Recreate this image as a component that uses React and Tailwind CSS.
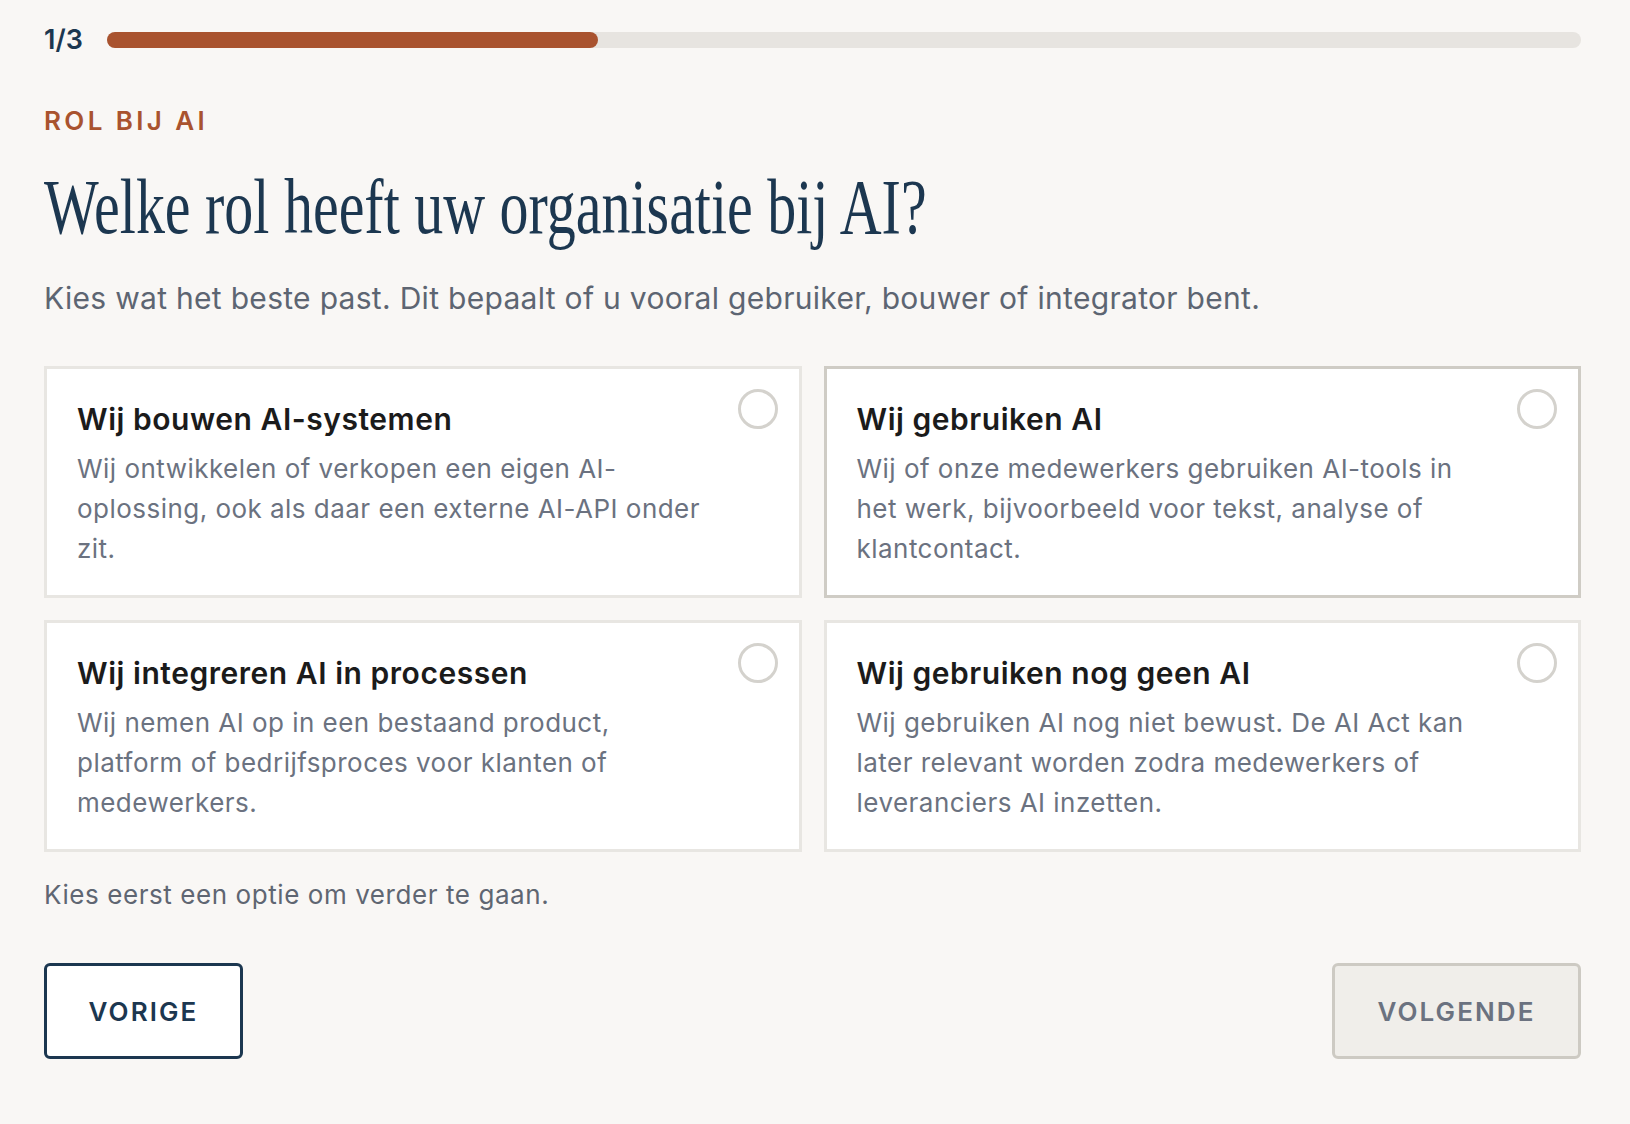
import { useState } from 'react';

const options = [
  {
    id: 'bouwer',
    title: 'Wij bouwen AI-systemen',
    text: 'Wij ontwikkelen of verkopen een eigen AI-oplossing, ook als daar een externe AI-API onder zit.',
  },
  {
    id: 'gebruiker',
    title: 'Wij gebruiken AI',
    text: 'Wij of onze medewerkers gebruiken AI-tools in het werk, bijvoorbeeld voor tekst, analyse of klantcontact.',
  },
  {
    id: 'integrator',
    title: 'Wij integreren AI in processen',
    text: 'Wij nemen AI op in een bestaand product, platform of bedrijfsproces voor klanten of medewerkers.',
  },
  {
    id: 'geen',
    title: 'Wij gebruiken nog geen AI',
    text: 'Wij gebruiken AI nog niet bewust. De AI Act kan later relevant worden zodra medewerkers of leveranciers AI inzetten.',
  },
];

function OptionCard({ option, hovered, onHover }) {
  return (
    <button
      type="button"
      onMouseEnter={() => onHover(option.id)}
      className={`flex items-start gap-7 bg-white border-[3px] pl-[30px] pr-[21px] pt-5 pb-[26px] text-left ${
        hovered ? 'border-[#cfccc5]' : 'border-[#e8e6e2]'
      }`}
    >
      <div className="flex-1 pt-3">
        <h3 className="text-[30px] leading-[36px] font-semibold tracking-[0.018em] text-[#1b1b1b]">{option.title}</h3>
        <p className="mt-3 text-[26px] leading-[40px] tracking-[0.018em] text-[#6b7280]">{option.text}</p>
      </div>
      <span className="w-10 h-10 shrink-0 rounded-full border-[3px] border-[#d4d2cd]" />
    </button>
  );
}

export default function App() {
  const [hovered, setHovered] = useState('gebruiker');

  return (
    <div className="min-h-screen bg-[#f9f7f5] font-['Inter','Liberation_Sans',sans-serif]">
      <div className="pl-[44px] pr-[49px] pt-6">
        {/* Progress */}
        <div className="flex items-center h-8">
          <span className="w-[63px] shrink-0 text-[27px] font-semibold text-[#1c3750]">1/3</span>
          <div className="flex-1 h-4 rounded-full bg-[#e7e4e0]">
            <div className="w-1/3 h-4 rounded-full bg-[#a9532f]" />
          </div>
        </div>

        <p className="mt-[49px] text-[26px] leading-[32px] font-semibold tracking-[0.13em] text-[#a9532f]">ROL BIJ AI</p>

        <h1 className="mt-[31px] whitespace-nowrap origin-left scale-x-[0.743] font-['Liberation_Serif',serif] text-[78px] leading-[78px] text-[#1c3750]">
          Welke rol heeft uw organisatie bij AI?
        </h1>

        <p className="mt-8 text-[30px] leading-[40px] tracking-[0.01em] text-[#5d6572]">
          Kies wat het beste past. Dit bepaalt of u vooral gebruiker, bouwer of integrator bent.
        </p>

        {/* Options */}
        <div className="mt-[48px] grid grid-cols-2 gap-[22px]">
          {options.map((o) => (
            <OptionCard key={o.id} option={o} hovered={hovered === o.id} onHover={setHovered} />
          ))}
        </div>

        <p className="mt-[25px] text-[26px] leading-[36px] tracking-[0.022em] text-[#5f6672]">Kies eerst een optie om verder te gaan.</p>

        {/* Navigation */}
        <div className="mt-[50px] flex items-center justify-between">
          <button className="w-[199px] h-[96px] rounded-md border-[3px] border-[#1c3750] bg-white text-[26px] font-semibold tracking-[0.08em] text-[#1c3750]">
            VORIGE
          </button>
          <button
            disabled
            className="w-[249px] h-[96px] rounded-md border-[3px] border-[#cdcac3] bg-[#f0eeea] text-[26px] font-semibold tracking-[0.08em] text-[#6b7280]"
          >
            VOLGENDE
          </button>
        </div>
      </div>
    </div>
  );
}
